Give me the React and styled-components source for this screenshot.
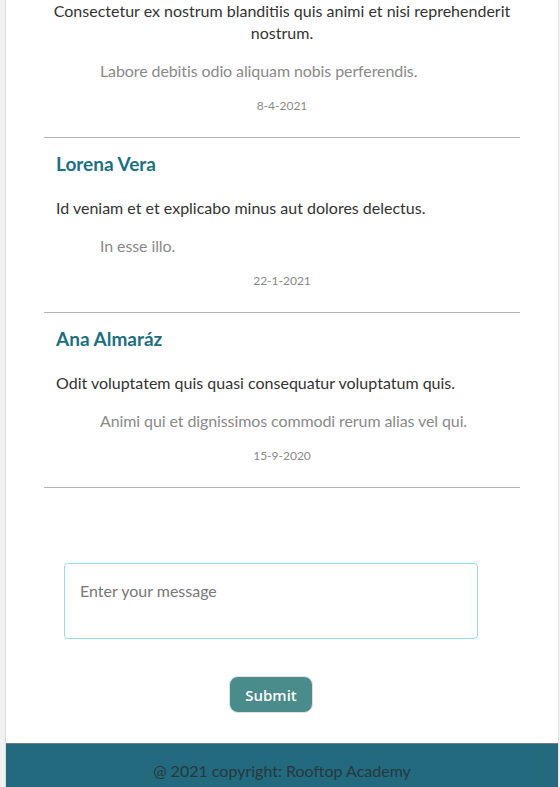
import React from "react";
import styled, { createGlobalStyle } from "styled-components";

const GlobalStyle = createGlobalStyle`
  body {
    margin: 0;
    background-color: #f1f1f1;
    font-family: "Lato", "Open Sans", sans-serif;
    color: #333;
  }
`;

const comments = [
  {
    name: "",
    text: "Consectetur ex nostrum blanditiis quis animi et nisi reprehenderit nostrum.",
    quote: "Labore debitis odio aliquam nobis perferendis.",
    date: "8-4-2021",
    cut: true,
  },
  {
    name: "Lorena Vera",
    text: "Id veniam et et explicabo minus aut dolores delectus.",
    quote: "In esse illo.",
    date: "22-1-2021",
  },
  {
    name: "Ana Almaráz",
    text: "Odit voluptatem quis quasi consequatur voluptatum quis.",
    quote: "Animi qui et dignissimos commodi rerum alias vel qui.",
    date: "15-9-2020",
  },
];

const App = () => {
  return (
    <>
      <GlobalStyle />
      <Page>
        <CommentList>
          {comments.map((c) => (
            <Card key={c.date} $cut={c.cut}>
              {c.name && <Name>{c.name}</Name>}
              <Text $center={c.cut}>{c.text}</Text>
              <Quote>{c.quote}</Quote>
              <DateLine>{c.date}</DateLine>
            </Card>
          ))}
        </CommentList>
        <Form onSubmit={(e) => e.preventDefault()}>
          <MessageBox placeholder="Enter your message" />
          <SubmitButton type="submit">Submit</SubmitButton>
        </Form>
        <Footer>
          <p>@ 2021 copyright: Rooftop Academy</p>
          <p>
            Coded by <a href="#">Sirli R</a>
          </p>
        </Footer>
      </Page>
    </>
  );
};

const Page = styled.div`
  margin-left: 5px;
  width: 552px;
  background-color: #fff;
  border-left: 1px solid #dcdcdc;
  border-right: 1px solid #e6e6e6;
  height: 787px;
  overflow: hidden;
`;

const CommentList = styled.div`
  width: 476px;
  margin: 0 auto 0 38px;
`;

const Card = styled.div`
  padding: ${(p) => (p.$cut ? "0" : "14px")} 12px 23px;
  border-bottom: 1px solid #b3b3b3;
`;

const Name = styled.h3`
  margin: 0 0 21px;
  font-size: 19px;
  line-height: 24px;
  font-weight: 700;
  color: #1c6f83;
`;

const Text = styled.p`
  margin: ${(p) => (p.$center ? "0 -14px" : "0")};
  font-size: 16px;
  line-height: 22px;
  color: #333;
  text-align: ${(p) => (p.$center ? "center" : "left")};
`;

const Quote = styled.p`
  margin: 16px 0 0 44px;
  font-size: 16px;
  line-height: 22px;
  color: #8a8a8a;
  letter-spacing: -0.1px;
`;

const DateLine = styled.p`
  margin: 16px 0 0;
  font-size: 12px;
  line-height: 16px;
  color: #8a8a8a;
  text-align: center;
`;

const Form = styled.form`
  width: 414px;
  margin: 75px 0 0 58px;
  display: flex;
  flex-direction: column;
  align-items: center;
`;

const MessageBox = styled.textarea`
  box-sizing: border-box;
  width: 414px;
  height: 76px;
  padding: 16px 15px;
  border: 1px solid #9adfe6;
  border-radius: 4px;
  font-family: "Lato", "Open Sans", sans-serif;
  font-size: 16px;
  line-height: 22px;
  color: #333;
  resize: none;
  outline: none;
  &::placeholder {
    color: #777;
  }
`;

const SubmitButton = styled.button`
  margin-top: 37px;
  height: 37px;
  padding: 0 15px;
  border: 1px solid #e0e0e0;
  border-radius: 9px;
  background-color: #4a8b8b;
  color: #fff;
  font-family: "Open Sans", "Lato", sans-serif;
  font-size: 15px;
  font-weight: 600;
  cursor: pointer;
`;

const Footer = styled.footer`
  margin-top: 30px;
  border-top: 1px solid #6f7f85;
  background-color: #236a7e;
  padding-top: 16px;
  text-align: center;
  p {
    margin: 0;
    font-size: 16px;
    line-height: 22px;
    color: #26383e;
  }
  a {
    color: #fff;
    font-weight: 700;
    text-decoration: none;
  }
`;

export default App;
